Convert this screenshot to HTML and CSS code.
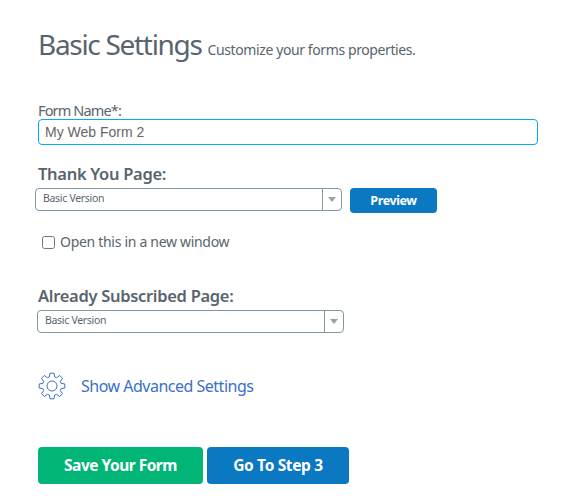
FILE: index.html
```html
<!DOCTYPE html>
<html lang="en">
<head>
    <meta charset="UTF-8">
    <meta name="viewport" content="width=device-width, initial-scale=1.0">
    <title>Basic Settings</title>
    <link rel="stylesheet" href="styles.css">
</head>
<body>
    <div class="form-container">
        <h1 class="title">Basic Settings <small>Customize your forms properties.</small></h1>

        <label class="field-label" for="formName">Form Name*:</label>
        <input class="text-input" id="formName" type="text" value="My Web Form 2">

        <h2 class="section-label">Thank You Page:</h2>
        <div class="select-row thank-you-row">
            <div class="select-box">
                <span class="select-value">Basic Version</span>
                <span class="select-arrow"></span>
            </div>
            <button class="preview-btn">Preview</button>
        </div>

        <label class="check-row">
            <input class="check-box" type="checkbox">
            <span>Open this in a new window</span>
        </label>

        <h2 class="section-label subscribed-label">Already Subscribed Page:</h2>
        <div class="select-box subscribed-select">
            <span class="select-value">Basic Version</span>
            <span class="select-arrow"></span>
        </div>

        <a class="advanced-link" href="#">
            <svg class="gear-icon" width="28" height="28" viewBox="-14 -14 28 28" fill="none" stroke="#3a70c9" stroke-width="1" stroke-linejoin="round">
                <path d="M-2.62-9.13-2.03-12.84H2.03L2.62-9.13 4.6-8.31 7.64-10.51 10.51-7.64 8.31-4.6 9.13-2.62 12.84-2.03V2.03L9.13 2.62 8.31 4.6 10.51 7.64 7.64 10.51 4.6 8.31 2.62 9.13 2.03 12.84H-2.03L-2.62 9.13-4.6 8.31-7.64 10.51-10.51 7.64-8.31 4.6-9.13 2.62-12.84 2.03V-2.03L-9.13-2.62-8.31-4.6-10.51-7.64-7.64-10.51-4.6-8.31Z"/>
                <circle r="5"/>
            </svg>
            <span>Show Advanced Settings</span>
        </a>

        <div class="actions">
            <button class="action-btn save-btn">Save Your Form</button>
            <button class="action-btn step-btn">Go To Step 3</button>
        </div>
    </div>
</body>
</html>
```

FILE: styles.css
```css
body {
    font-family: "Noto Sans", Arial, sans-serif;
    margin: 0;
    background-color: white;
    color: #58646d;
}

.form-container {
    padding: 26px 29px 0 38px;
}

.title {
    font-size: 28px;
    font-weight: 400;
    line-height: 36px;
    margin: 0 0 33px;
    letter-spacing: -1.3px;
}

.title small {
    font-size: 14px;
    letter-spacing: -0.4px;
}

.field-label {
    display: block;
    font-size: 14.5px;
    line-height: 18px;
    letter-spacing: -0.85px;
}

.text-input {
    display: block;
    box-sizing: border-box;
    width: 500px;
    height: 26px;
    padding: 0 6px;
    font-family: "Liberation Sans", Arial, sans-serif;
    font-size: 14px;
    color: #666;
    border: 1px solid #00aeef;
    border-radius: 4px;
    outline: none;
}

.section-label {
    font-size: 16.5px;
    font-weight: 600;
    line-height: 22px;
    margin: 18px 0 3px;
    letter-spacing: -0.3px;
}

.select-row {
    display: flex;
    align-items: flex-start;
    gap: 8px;
}

.thank-you-row {
    margin-left: -3px;
}

.select-box {
    display: flex;
    box-sizing: border-box;
    width: 307px;
    height: 23px;
    border: 1px solid #7f97a8;
    border-radius: 4px;
    font-size: 10.5px;
    line-height: 19px;
    letter-spacing: -0.3px;
}

.subscribed-select {
    margin-left: -1px;
}

.select-value {
    flex: 1;
    padding-left: 7px;
}

.select-arrow {
    width: 18px;
    border-left: 1px solid #7f97a8;
    position: relative;
}

.select-arrow::after {
    content: "";
    position: absolute;
    left: 5px;
    top: 8px;
    border-left: 4px solid transparent;
    border-right: 4px solid transparent;
    border-top: 5px solid #94a3af;
}

.preview-btn {
    width: 87px;
    height: 25px;
    padding: 0;
    font-family: "Noto Sans", Arial, sans-serif;
    font-size: 12.5px;
    font-weight: 700;
    letter-spacing: -0.4px;
    color: white;
    background-color: #0b78c2;
    border: none;
    border-radius: 4px;
}

.check-row {
    display: flex;
    align-items: center;
    gap: 5px;
    margin: 20px 0 0 4px;
    font-size: 14px;
    line-height: 18px;
    letter-spacing: -0.3px;
}

.check-box {
    width: 13px;
    height: 13px;
    margin: 0;
}

.subscribed-label {
    margin-top: 34px;
}

.advanced-link {
    display: flex;
    align-items: center;
    gap: 15px;
    margin-top: 39px;
    font-size: 16px;
    letter-spacing: -0.5px;
    color: #3a70c9;
    text-decoration: none;
}

.actions {
    display: flex;
    gap: 4px;
    margin-top: 47px;
}

.action-btn {
    height: 37px;
    padding: 0 0 2px;
    font-family: "Noto Sans", Arial, sans-serif;
    font-size: 15.5px;
    font-weight: 700;
    letter-spacing: -0.5px;
    color: white;
    border: none;
    border-radius: 4px;
}

.save-btn {
    width: 165px;
    background-color: #00b576;
}

.step-btn {
    width: 142px;
    letter-spacing: -0.35px;
    background-color: #0b78c2;
}
```
